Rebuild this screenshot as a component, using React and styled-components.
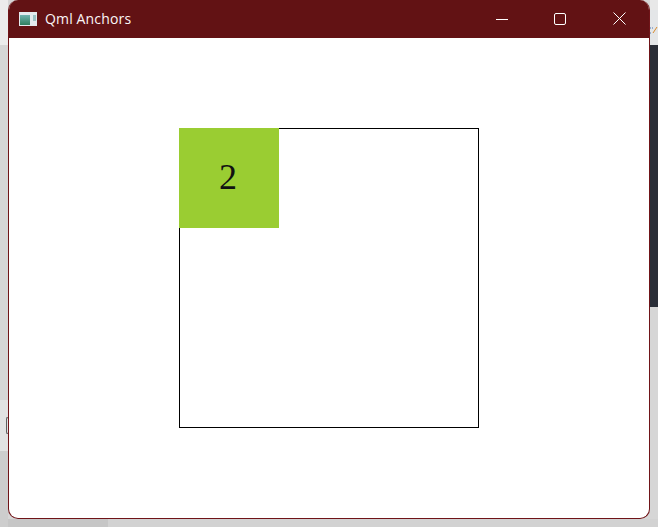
import React from "react";
import styled, { createGlobalStyle } from "styled-components";

const GlobalStyle = createGlobalStyle`
  html, body {
    margin: 0;
    padding: 0;
    background: #d4d4d4;
    overflow: hidden;
  }
`;

// what shows of the desktop around the window
const Desktop = styled.div`
  position: relative;
  box-sizing: border-box;
  width: 658px;
  height: 527px;
  padding: 0 8px 8px;
  background:
    linear-gradient(#e8e8e8 0 10px, #e4e6e8 10px 45px, #2a2e37 45px 307px, transparent 307px) right top / 8px 100% no-repeat,
    linear-gradient(#ececec 0 45px, #d6d6d6 45px 400px, #e2e2e2 400px 451px, #cdcdcd 451px) left top / 8px 100% no-repeat,
    linear-gradient(90deg, #c6c6c6 0 108px, #d2d2d2 108px) left bottom / 100% 8px no-repeat,
    #d6d6d6;
`;

const PeekingControl = styled.div`
  position: absolute;
  left: 6px;
  top: 417px;
  width: 3px;
  height: 17px;
  box-sizing: border-box;
  border: 1px solid #5f5f5f;
  border-right: none;
  border-radius: 2px 0 0 2px;
`;

const StripIcon = styled.svg`
  position: absolute;
  right: 0;
  top: 25px;
  width: 8px;
  height: 10px;
`;

const Window = styled.div`
  position: relative;
  display: flex;
  flex-direction: column;
  box-sizing: border-box;
  width: 642px;
  height: 519px;
  background: #fff;
  border: 1px solid #701418;
  border-top: none;
  border-radius: 10px;
  overflow: hidden;
  margin: 0;
`;

const TitleBar = styled.div`
  display: flex;
  align-items: center;
  flex: none;
  height: 38px;
  margin: 0 -1px;
  background: #621214;
  color: #fbf6f6;
  font-family: "Open Sans", "Noto Sans", sans-serif;
  font-size: 14px;
  letter-spacing: 0.15px;
`;

const AppIcon = styled.svg`
  flex: none;
  width: 18px;
  height: 14px;
  margin-left: 11px;
  margin-top: -1px;
`;

const Title = styled.span`
  margin-left: 8px;
  flex: 1;
  margin-top: -1px;
`;

const WindowButton = styled.div`
  display: flex;
  align-items: center;
  justify-content: center;
  width: 58px;
  height: 38px;
  margin-top: -1px;
`;

const Controls = styled.div`
  display: flex;
  margin-right: 2px;
  ${WindowButton}:not(:last-child) {
    position: relative;
    left: -1px;
  }
`;

const Canvas = styled.div`
  flex: 1;
  padding: 90px 0 0 170px;
`;

const Frame = styled.div`
  box-sizing: border-box;
  width: 300px;
  height: 300px;
  border: 1px solid #000;
  background: #fff;
`;

const Tile = styled.div`
  display: flex;
  align-items: center;
  justify-content: center;
  box-sizing: border-box;
  width: 100px;
  height: 100px;
  margin: -1px;
  padding: 0 2px 2px 0;
  background: #9acd32;
  color: #111;
  font-family: "Liberation Serif", "Times New Roman", serif;
  font-size: 36px;
  line-height: 1;
`;

export default function App() {
  return (
    <Desktop>
      <GlobalStyle />
      <PeekingControl />
      <StripIcon viewBox="0 0 8 10">
        <path d="M0 3H3M0 8H2" stroke="#4a78b8" strokeWidth="1" strokeDasharray="1 1" />
        <path d="M3 8L7 2" stroke="#d98a2b" strokeWidth="1" />
      </StripIcon>
      <Window>
        <TitleBar>
          <AppIcon viewBox="0 0 18 14">
            <defs>
              <linearGradient id="pane" x1="0" y1="0" x2="0" y2="1">
                <stop offset="0" stopColor="#6fb3b0" />
                <stop offset="1" stopColor="#2f7f5f" />
              </linearGradient>
            </defs>
            <rect x="0" y="0" width="18" height="14" fill="#e4eaee" />
            <rect x="1" y="3" width="10" height="10" fill="url(#pane)" />
            <rect x="14" y="3" width="3" height="6" fill="#9cc2c4" />
          </AppIcon>
          <Title>Qml Anchors</Title>
          <Controls>
            <WindowButton>
              <svg width="12" height="12" viewBox="0 0 12 12">
                <path d="M0 6.5H12" stroke="#fff" strokeWidth="1" />
              </svg>
            </WindowButton>
            <WindowButton>
              <svg width="12" height="12" viewBox="0 0 12 12">
                <rect x="0.5" y="0.5" width="11" height="11" rx="1.5" fill="none" stroke="#fff" strokeWidth="1" />
              </svg>
            </WindowButton>
            <WindowButton>
              <svg width="13" height="13" viewBox="0 0 13 13">
                <path d="M0.5 0.5L12.5 12.5M12.5 0.5L0.5 12.5" stroke="#fff" strokeWidth="1" />
              </svg>
            </WindowButton>
          </Controls>
        </TitleBar>
        <Canvas>
          <Frame>
            <Tile>2</Tile>
          </Frame>
        </Canvas>
      </Window>
    </Desktop>
  );
}
